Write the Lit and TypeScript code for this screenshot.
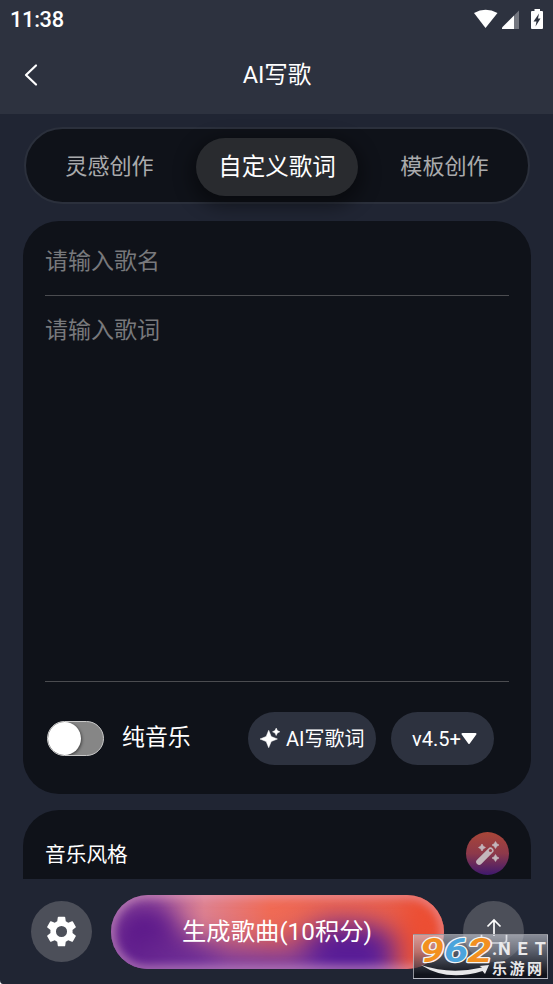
import { LitElement, html, css, svg } from "lit";
import { customElement, state } from "lit/decorators.js";
import { classMap } from "lit/directives/class-map.js";

const star = (cx: number, cy: number, r: number, pinch = 0.27) => {
  const k = r * pinch;
  return svg`<path d=${`M${cx} ${cy - r}L${cx + k} ${cy - k}L${cx + r} ${cy}L${cx + k} ${cy + k}L${cx} ${cy + r}L${cx - k} ${cy + k}L${cx - r} ${cy}L${cx - k} ${cy - k}Z`} stroke-linejoin="round" />`;
};

@customElement("site-badge")
class SiteBadge extends LitElement {
  static styles = css`
    :host { display: block; box-sizing: border-box; width: 135px; height: 45px; border: 1px solid rgba(210, 212, 220, 0.65);
      background: linear-gradient(rgba(205, 208, 218, 0.6), rgba(140, 144, 155, 0.5) 40%, rgba(12, 14, 20, 0.75) 92%); }
    svg { display: block; width: 133px; height: 43px; overflow: visible; }
    .digits { font: italic 700 33px Roboto, Arial, sans-serif; paint-order: stroke; stroke: #f4f4f4; stroke-width: 2.4px; stroke-linejoin: round; }
    .net { font: 700 18px Roboto, "Liberation Sans", sans-serif; fill: #e9e9eb; }
    .cn { font: 700 15px "Noto Sans CJK SC", sans-serif; fill: #e8e8ea; }
  `;
  render() {
    return html`<svg viewBox="0 0 133 43">
      <g class="digits">
        <text x="6" y="26.500" textLength="24" lengthAdjust="spacingAndGlyphs" fill="#f2901f">9</text>
        <text x="30" y="26.500" textLength="24" lengthAdjust="spacingAndGlyphs" fill="#4ba4dc">6</text>
        <text x="53.500" y="26.500" textLength="24" lengthAdjust="spacingAndGlyphs" fill="#f2901f">2</text>
      </g>
      <path d="M7 30Q36 40 68 32.500L65.500 31L75 30L71 39L68.500 36Q33 47 7 30Z" fill="#e8e8ea" />
      <text class="net" x="78" y="20">.</text>
      <text class="net" x="84" y="20" textLength="48">NET</text>
      <text class="cn" x="78" y="39" textLength="50">乐游网</text>
    </svg>`;
  }
}

@customElement("app-root")
class AppRoot extends LitElement {
  @state() private active = 1;
  private tabs = ["灵感创作", "自定义歌词", "模板创作"];

  static styles = css`
    :host { display: flex; flex-direction: column; position: relative; box-sizing: border-box; width: 553px; height: 984px; overflow: hidden;
      background: #202533; color: #fff; font-family: Roboto, "Noto Sans CJK SC", sans-serif; white-space: nowrap; }
    * { box-sizing: border-box; }
    svg { display: block; flex: none; }
    .top { flex: none; height: 114px; background: #2d323f; }
    .status { height: 38px; padding: 0 9px 0 10px; display: flex; justify-content: space-between; align-items: center; font-size: 21.8px; font-weight: 500; letter-spacing: -0.3px; }
    .nav { height: 74px; padding: 0 24px; display: grid; grid-template-columns: 60px 1fr 60px; align-items: center; }
    .title { text-align: center; font-size: 23.5px; line-height: 30px; padding-left: 1px; margin-top: -1px; }
    .content { flex: none; height: 765px; overflow: hidden; padding: 13px 22px 0 23px; display: flex; flex-direction: column; }
    .tabs { flex: none; height: 77px; margin: 0 1px; border: 2px solid #2b303c; border-radius: 39px; background: #0f1219; display: grid; grid-template-columns: 170px 162px 170px; align-items: center; padding-top: 2px; }
    .tab { height: 58px; display: flex; align-items: center; justify-content: center; font-size: 22.1px; line-height: 30px; color: #a9aaac; padding: 0 3px 1px 0; border-radius: 29px; }
    .tab:last-child { padding: 0 0 1px 3px; }
    .tab.on { color: #fff; background: #292b2f; font-size: 23.5px; padding: 0; box-shadow: 0 6px 18px 5px rgba(0, 0, 0, 0.4); }
    .card { flex: none; background: #0f1219; border-radius: 36px; padding: 0 22px; }
    .compose { height: 573px; margin-top: 17px; display: flex; flex-direction: column; }
    .field { font-size: 23px; line-height: 30px; color: #78797c; border-bottom: 1px solid #4b4c50; }
    .name { height: 75px; padding-top: 26px; }
    .lyrics { height: 386px; padding-top: 20px; }
    .tools { height: 112px; display: flex; align-items: center; padding: 0 15px 0 2px; }
    .switch { width: 57px; height: 35px; border-radius: 18px; background: #868686; border: 1px solid #c9c9c9; overflow: hidden; }
    .knob { width: 33px; height: 33px; border-radius: 50%; background: #fff; box-shadow: 1px 1px 3px rgba(0, 0, 0, 0.5); }
    .label { font-size: 22.9px; line-height: 30px; margin: 0 auto 1px 18px; }
    .pill { height: 53px; border-radius: 27px; background: #2d323f; display: flex; align-items: center; font-size: 20px; line-height: 28px; }
    .write { width: 128px; padding-left: 12px; gap: 6px; font-size: 20px; }
    .write span { padding-top: 2px; }
    .version { width: 103px; margin-left: 15px; padding-left: 21px; }
    .version span { padding-top: 1px; }
    .style { height: 120px; margin-top: 16px; display: flex; justify-content: space-between; font-size: 20.7px; line-height: 28px; padding-top: 22px; }
    .style span { margin-top: 9px; }
    .wand { width: 43px; height: 43px; border-radius: 50%; background: linear-gradient(#a94638, #8d394a 50%, #3f196e); }
    .bottom { height: 105px; display: flex; align-items: center; justify-content: space-between; padding: 0 29px 0 31px; }
    .round { width: 61px; height: 61px; border-radius: 50%; background: #4c4f59; display: flex; align-items: center; justify-content: center; }
    .generate { width: 333px; height: 74px; border-radius: 37px; display: grid; place-items: center; font-size: 24.3px; line-height: 32px; margin-right: 1px; overflow: hidden; }
    .generate > * { grid-area: 1 / 1; }
    .generate span { z-index: 1; }
    .badge { position: absolute; left: 413px; top: 934px; }
    .corner { position: absolute; left: 0; bottom: 0; }
  `;

  private glow() {
    return html`<svg width="333" height="74" viewBox="0 0 333 74">
      <defs>
        <linearGradient id="base"><stop offset="0" stop-color="#9457a2" /><stop offset=".14" stop-color="#ab609f" /><stop offset=".28" stop-color="#de8190" /><stop offset=".48" stop-color="#f06b55" /><stop offset=".75" stop-color="#ea6250" /><stop offset="1" stop-color="#e9573e" /></linearGradient>
        <filter id="soft" x="-60%" y="-100%" width="220%" height="300%" color-interpolation-filters="sRGB"><feGaussianBlur stdDeviation="13" /></filter>
        <filter id="rim" x="-10%" y="-30%" width="120%" height="160%" color-interpolation-filters="sRGB"><feGaussianBlur stdDeviation="4" /></filter>
      </defs>
      <rect width="333" height="74" fill="url(#base)" />
      <g filter="url(#soft)">
        <path d="M40 42H120L170 46L215 22L275 32L290 100H20Z" fill="#983f7c" opacity=".75" />
        <path d="M-20 60H278L300 130H-20Z" fill="#753ba4" />
        <ellipse cx="34" cy="43" rx="36" ry="36" fill="#5b178a" />
        <ellipse cx="62" cy="56" rx="46" ry="16" fill="#68268f" />
        <ellipse cx="240" cy="54" rx="46" ry="24" fill="#561a96" />
        <ellipse cx="314" cy="38" rx="22" ry="44" fill="#ec4d32" />
      </g>
      <rect x="-1" y="-1" width="335" height="76" rx="38" fill="none" stroke="#eab0cc" stroke-opacity=".5" stroke-width="9" filter="url(#rim)" />
    </svg>`;
  }

  render() {
    return html`
      <header class="top">
        <div class="status">
          <span>11:38</span>
          <svg width="72" height="22" viewBox="472 7 72 22" fill="#fff">
            <path d="M474 12Q485.500 5.500 497.500 12L485.500 27Z" />
            <path d="M519 9.500V28H514V14.500Z" fill="#747780" />
            <path d="M514 14.500V28H502V26.500Z" />
            <path fill-rule="evenodd" d="M534.500 8H540V10H542Q543 10 543 11V27Q543 28 542 28H532Q531 28 531 27V11Q531 10 532 10H534.500ZM539 12.500L533.500 20.500H536.500L535.500 25.500L540.500 17.500H538Z" />
          </svg>
        </div>
        <div class="nav">
          <svg width="14" height="24" viewBox="0 0 14 24" fill="none" stroke="#fff" stroke-width="2.200" stroke-linecap="round" stroke-linejoin="round"><path d="M12 2.500L2 12L12 21.500" /></svg>
          <div class="title">AI写歌</div>
        </div>
      </header>
      <main class="content">
        <div class="tabs">
          ${this.tabs.map((t, i) => html`<div class=${classMap({ tab: true, on: i === this.active })} @click=${() => (this.active = i)}>${t}</div>`)}
        </div>
        <section class="card compose">
          <div class="field name">请输入歌名</div>
          <div class="field lyrics">请输入歌词</div>
          <div class="tools">
            <div class="switch"><div class="knob"></div></div>
            <span class="label">纯音乐</span>
            <div class="pill write">
              <svg width="20" height="22" viewBox="0 0 20 22" fill="#fff" stroke="#fff" stroke-width="0.500">${star(8.7, 12, 8.7, 0.29)}${star(16.2, 4.8, 3.7, 0.32)}</svg>
              <span>AI写歌词</span>
            </div>
            <div class="pill version">
              <span>v4.5+</span>
              <svg width="16" height="12" viewBox="0 0 16 12" fill="#fff" stroke="#fff" stroke-width="2" stroke-linejoin="round"><path d="M1.500 2H14.500L8 11Z" /></svg>
            </div>
          </div>
        </section>
        <section class="card style">
          <span>音乐风格</span>
          <div class="wand">
            <svg width="43" height="43" viewBox="0 0 43 43" fill="#c3b6bb" stroke="#c3b6bb" stroke-width="0.800">
              <path d="M13.200 29.800L24.500 18.500" stroke-width="6" stroke-linecap="round" />
              <circle cx="24.500" cy="18.500" r="1.600" fill="#973d47" stroke="none" />
              ${star(16, 15.5, 3.4, 0.36)}${star(29.5, 13, 3.4, 0.36)}${star(29.5, 26, 3.4, 0.36)}
            </svg>
          </div>
        </section>
      </main>
      <footer class="bottom">
        <div class="round">
          <svg width="37" height="37" viewBox="0 0 24 24" fill="#fff"><path d="M19.140 12.940c.040-.300.060-.610.060-.940s-.020-.640-.070-.940l2.030-1.580a.490.490 0 0 0 .120-.610l-1.920-3.320a.490.490 0 0 0-.590-.220l-2.390.960a7.030 7.030 0 0 0-1.620-.940l-.360-2.540A.480.480 0 0 0 13.920 2.400h-3.840a.480.480 0 0 0-.480.410l-.360 2.540c-.590.240-1.130.570-1.620.940l-2.390-.960a.490.490 0 0 0-.590.220L2.720 8.870a.480.480 0 0 0 .120.610l2.030 1.580c-.050.300-.070.620-.070.940s.020.640.070.940l-2.030 1.580a.490.490 0 0 0-.120.610l1.920 3.320c.120.220.370.290.590.220l2.390-.960c.500.380 1.030.700 1.620.940l.360 2.540c.050.240.240.410.480.410h3.840c.240 0 .440-.170.470-.410l.360-2.540c.590-.240 1.130-.560 1.620-.940l2.390.960c.220.080.470 0 .590-.220l1.920-3.320a.480.480 0 0 0-.120-.610zM12 15.600a3.600 3.600 0 1 1 0-7.200 3.600 3.600 0 0 1 0 7.200z" /></svg>
        </div>
        <div class="generate">${this.glow()}<span>生成歌曲(10积分)</span></div>
        <div class="round">
          <svg width="30" height="28" viewBox="0 0 30 28" fill="none" stroke="#fff" stroke-width="1.700"><path d="M15 18V2.500M8.500 8.500L15 2L21.500 8.500M2.500 16V22Q2.500 25 5.500 25H24.500Q27.500 25 27.500 22V16" /></svg>
        </div>
      </footer>
      <svg class="corner" width="3" height="4" viewBox="0 0 3 4" fill="#fff"><path d="M0 0Q0 4 3 4H0Z" /></svg>
      <site-badge class="badge"></site-badge>
    `;
  }
}
